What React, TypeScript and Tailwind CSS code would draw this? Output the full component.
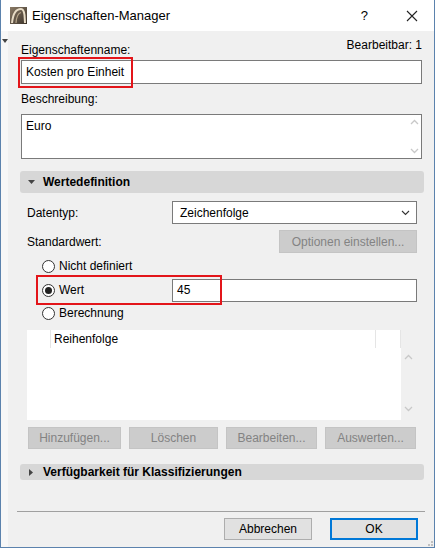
import React from "react";

const font = { fontFamily: '"Liberation Sans", Arial, sans-serif' };

function Radio({ checked, label }: { checked?: boolean; label: string }) {
  return (
    <div className="flex items-center h-[22px]">
      <div className="w-[13px] h-[13px] rounded-full border border-[#333] bg-white flex items-center justify-center">
        {checked && <div className="w-[7px] h-[7px] rounded-full bg-[#222]" />}
      </div>
      <span className="ml-[4px] text-[12px] text-black">{label}</span>
    </div>
  );
}

function DisabledBtn({ label, w }: { label: string; w: string }) {
  return (
    <div className={`${w} h-[22px] bg-[#cccccc] border border-[#c4c4c4] flex items-center justify-center text-[12px] text-[#838383]`}>
      {label}
    </div>
  );
}

function Arrows({ h }: { h: string }) {
  return (
    <div className={`w-[14px] ${h} flex flex-col justify-between items-center py-[4px]`}>
      <svg width="9" height="6" viewBox="0 0 9 6"><path d="M1 5 L4.5 1.5 L8 5" fill="none" stroke="#c8c8c8" strokeWidth="1.3" /></svg>
      <svg width="9" height="6" viewBox="0 0 9 6"><path d="M1 1 L4.5 4.5 L8 1" fill="none" stroke="#c8c8c8" strokeWidth="1.3" /></svg>
    </div>
  );
}

export default function App() {
  return (
    <div style={font} className="w-[435px] h-[548px] bg-white flex flex-col border-x border-b border-[#5b82ad] overflow-hidden">
      {/* Title bar */}
      <div className="h-[31px] bg-white flex items-center shrink-0">
        <svg className="ml-[9px]" width="17" height="17" viewBox="0 0 17 17">
          <defs>
            <linearGradient id="lg" x1="0" y1="0" x2="1" y2="1">
              <stop offset="0" stopColor="#8a7a66" />
              <stop offset="1" stopColor="#3c332a" />
            </linearGradient>
          </defs>
          <rect x="0" y="0" width="17" height="17" fill="url(#lg)" />
          <path d="M2 16 C3 6 7 2 11 2 C13 2 14 4 14.5 8 L15 16" fill="none" stroke="#e8dcc6" strokeWidth="2" />
          <path d="M6 16 C6.5 9 8.5 6 11 5.5" fill="none" stroke="#b6a58a" strokeWidth="1.2" />
        </svg>
        <span className="ml-[5px] text-[13px] text-black">Eigenschaften-Manager</span>
        <span className="ml-auto text-[13px] text-black mr-[38px]">?</span>
        <svg className="mr-[16px]" width="12" height="12" viewBox="0 0 12 12">
          <path d="M1 1 L11 11 M11 1 L1 11" stroke="#222" strokeWidth="1.1" />
        </svg>
      </div>

      {/* Client */}
      <div className="flex flex-1 bg-[#f0f0f0]">
        <div className="w-[7px] bg-[#f7f7f7] shrink-0 pt-[8px] flex justify-center">
          <svg width="6" height="4" viewBox="0 0 6 4"><path d="M0 0 L6 0 L3 4 Z" fill="#444" /></svg>
        </div>
        <div className="flex-1 flex flex-col pl-[13px] pr-[12px]">
          {/* name label row */}
          <div className="flex justify-between items-end mt-[8px] h-[16px]">
            <span className="text-[12px] text-black relative top-[4px]">Eigenschaftenname:</span>
            <span className="text-[12px] text-black relative top-[-1px]">Bearbeitbar: 1</span>
          </div>
          {/* name input with red highlight */}
          <div className="mt-[5px] relative h-[24px] bg-white border border-[#7a7a7a] flex items-center pl-[4px]">
            <span className="text-[12px] text-black">Kosten pro Einheit</span>
            <div className="absolute left-[-4px] top-[-4px] w-[115px] h-[31px] border-2 border-[#e3151a]" />
          </div>
          <div className="mt-[8px] h-[14px] text-[12px] text-black leading-[14px]">Beschreibung:</div>
          <div className="mt-[8px] h-[45px] bg-white border border-[#7a7a7a] flex">
            <span className="flex-1 text-[12px] text-black pl-[4px] pt-[2px]">Euro</span>
            <Arrows h="h-[43px]" />
          </div>

          {/* Wertedefinition */}
          <div className="mt-[12px] h-[22px] -mr-[2px] -ml-[1px] bg-[#d7d7d7] rounded-[3px] flex items-center">
            <svg className="ml-[8px]" width="7" height="4" viewBox="0 0 7 4"><path d="M0 0 L7 0 L3.5 4 Z" fill="#444" /></svg>
            <span className="ml-[8px] text-[12px] font-bold text-black">Wertedefinition</span>
          </div>

          <div className="pl-[6px] pr-[5px] flex flex-col">
            <div className="mt-[8px] flex items-center h-[23px]">
              <span className="w-[145px] text-[12px] text-black">Datentyp:</span>
              <div className="flex-1 h-[23px] bg-white border border-[#7a7a7a] flex items-center pl-[7px] pr-[6px]">
                <span className="flex-1 text-[12px] text-black">Zeichenfolge</span>
                <svg width="9" height="6" viewBox="0 0 9 6"><path d="M1 1 L4.5 4.5 L8 1" fill="none" stroke="#333" strokeWidth="1.1" /></svg>
              </div>
            </div>
            <div className="mt-[6px] flex items-center h-[23px]">
              <span className="flex-1 text-[12px] text-black">Standardwert:</span>
              <div className="w-[138px] h-[23px] bg-[#cccccc] border border-[#c4c4c4] flex items-center justify-center text-[12px] text-[#838383]">Optionen einstellen...</div>
            </div>
            <div className="pl-[15px] flex flex-col mt-[2px]">
              <Radio label="Nicht definiert" />
              <div className="flex items-center h-[24px] mt-[1px] relative">
                <div className="w-[130px]"><Radio checked label="Wert" /></div>
                <div className="flex-1 h-[23px] bg-white border border-[#7a7a7a] flex items-center pl-[4px]">
                  <span className="text-[12px] text-black">45</span>
                </div>
                <div className="absolute left-[-6px] top-[-3px] w-[186px] h-[30px] border-2 border-[#e3151a]" />
              </div>
              <Radio label="Berechnung" />
            </div>

            {/* list */}
            <div className="mt-[6px] flex">
              <div className="w-[374px] h-[90px] bg-white flex flex-col">
                <div className="h-[18px] flex">
                  <div className="w-[24px] border-r border-[#e5e5e5]" />
                  <div className="flex-1 pl-[3px] text-[12px] text-black leading-[18px] border-r border-[#e5e5e5]">Reihenfolge</div>
                  <div className="w-[25px] border-r border-[#e5e5e5]" />
                </div>
              </div>
              <div className="ml-[0px] mt-[20px]">
                <Arrows h="h-[66px]" />
              </div>
            </div>

            <div className="mt-[7px] flex gap-[8px] pl-[1px]">
              <DisabledBtn label="Hinzufügen..." w="w-[93px]" />
              <DisabledBtn label="Löschen" w="w-[89px]" />
              <DisabledBtn label="Bearbeiten..." w="w-[91px]" />
              <DisabledBtn label="Auswerten..." w="w-[91px]" />
            </div>
          </div>

          {/* Verfügbarkeit */}
          <div className="mt-[15px] h-[16px] -mr-[2px] -ml-[1px] bg-[#d7d7d7] rounded-[3px] flex items-center">
            <svg className="ml-[9px]" width="4" height="7" viewBox="0 0 4 7"><path d="M0 0 L4 3.5 L0 7 Z" fill="#444" /></svg>
            <span className="ml-[10px] text-[12px] font-bold text-black">Verfügbarkeit für Klassifizierungen</span>
          </div>

          <div className="mt-[31px] -ml-[4px] -mr-[3px] h-px bg-[#a0a0a0]" />

          <div className="mt-[6px] flex justify-end gap-[18px] pr-[4px]">
            <div className="w-[88px] h-[22px] bg-[#e1e1e1] border border-[#adadad] flex items-center justify-center text-[12px] text-black">Abbrechen</div>
            <div className="w-[88px] h-[22px] bg-[#e1e1e1] border-2 border-[#0078d7] flex items-center justify-center text-[12px] text-black">OK</div>
          </div>
          <div className="flex justify-end mt-[1px] -mr-[11px]">
            <svg width="8" height="8" viewBox="0 0 8 8">
              <rect x="6" y="0" width="2" height="2" fill="#c0c0c0" />
              <rect x="3" y="3" width="2" height="2" fill="#c0c0c0" />
              <rect x="6" y="3" width="2" height="2" fill="#c0c0c0" />
              <rect x="0" y="6" width="2" height="2" fill="#c0c0c0" />
              <rect x="3" y="6" width="2" height="2" fill="#c0c0c0" />
              <rect x="6" y="6" width="2" height="2" fill="#c0c0c0" />
            </svg>
          </div>
        </div>
      </div>
    </div>
  );
}
